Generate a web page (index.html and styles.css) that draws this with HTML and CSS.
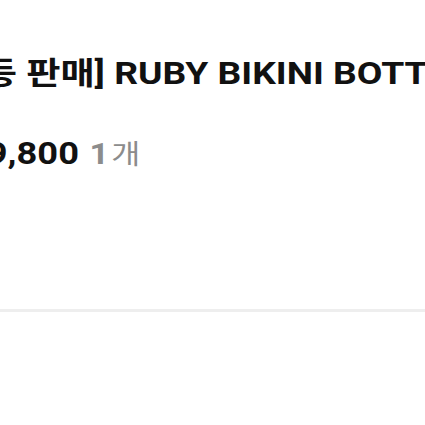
FILE: index.html
```html
<!DOCTYPE html>
<html lang="ko">
<head>
  <meta charset="UTF-8">
  <title>주문 상품</title>
  <link rel="stylesheet" href="styles.css">
</head>
<body>

  <div class="item">
    <h2 class="item-name">[재고 정리 등 판매] RUBY BIKINI BOTTOM</h2>
    <div class="item-price">
      <span class="amount">29,800</span>
      <span class="qty">1<span class="unit">개</span></span>
    </div>
  </div>

  <div class="divider"></div>

</body>
</html>
```

FILE: styles.css
```css
body {
  margin: 0;
  font-family: Roboto, "Noto Sans CJK KR", sans-serif;
  background: #fff;
  color: #111;
  overflow: hidden;
}

.item {
  height: 309px;
  padding-top: 54px;
  box-sizing: border-box;
  white-space: nowrap;
}

/* the capture is a little wider than the font draws it */
.item-name {
  margin: 0 0 0 -183px;
  font-size: 31px;
  font-weight: 700;
  line-height: 40px;
  transform: scaleX(1.2);
  transform-origin: 0 0;
}

.item-price {
  margin: 40px 0 0 -34px;
  line-height: 40px;
  transform: scaleX(1.17);
  transform-origin: 0 0;
}

.amount {
  font-size: 31px;
  font-weight: 700;
}

.qty {
  margin-left: 5px;
  font-size: 29px;
  font-weight: 700;
  color: #8c8c8c;
}

.unit {
  margin-left: 2px;
  font-size: 27px;
  font-weight: 400;
}

.divider {
  height: 3px;
  background: #eeeeee;
}
```
